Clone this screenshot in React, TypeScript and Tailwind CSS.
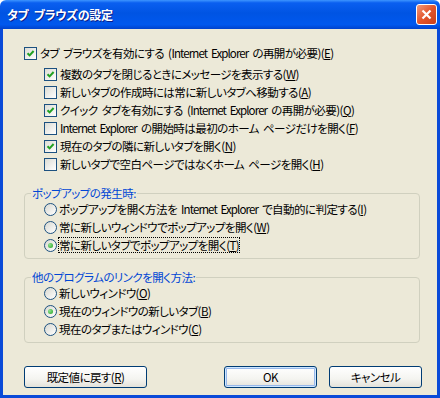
import React from "react";

type Item = {
  label: string;
  key: string;
  checked?: boolean;
};

const tabOptions: Item[] = [
  { label: "複数のタブを閉じるときにメッセージを表示する", key: "W", checked: true },
  { label: "新しいタブの作成時には常に新しいタブへ移動する", key: "A" },
  { label: "クイック タブを有効にする (Internet Explorer の再開が必要)", key: "Q", checked: true },
  { label: "Internet Explorer の開始時は最初のホーム ページだけを開く", key: "F" },
  { label: "現在のタブの隣に新しいタブを開く", key: "N", checked: true },
  { label: "新しいタブで空白ページではなくホーム ページを開く", key: "H" },
];

const popupOptions: Item[] = [
  { label: "ポップアップを開く方法を Internet Explorer で自動的に判定する", key: "I" },
  { label: "常に新しいウィンドウでポップアップを開く", key: "W" },
  { label: "常に新しいタブでポップアップを開く", key: "T", checked: true },
];

const linkOptions: Item[] = [
  { label: "新しいウィンドウ", key: "O" },
  { label: "現在のウィンドウの新しいタブ", key: "B", checked: true },
  { label: "現在のタブまたはウィンドウ", key: "C" },
];

// Latin runs are narrower in the original UI font
const renderText = (text: string) =>
  text.split("Internet Explorer").map((part, i, arr) => (
    <React.Fragment key={i}>
      {part}
      {i < arr.length - 1 && <span className="tracking-[-0.9px]">Internet Explorer</span>}
    </React.Fragment>
  ));

const Label = ({ item }: { item: Item }) => (
  <span className="whitespace-nowrap">
    {renderText(item.label)}(<u>{item.key}</u>)
  </span>
);

const CheckBox = ({ checked }: { checked?: boolean }) => (
  <span className="w-[13px] h-[13px] shrink-0 border border-[#1c5180] bg-[linear-gradient(135deg,#dcdcd4,#ffffff)] flex items-center justify-center">
    {checked && (
      <svg width="9" height="9" viewBox="0 0 9 9">
        <path d="M1.5 4.2 L3.6 6.4 L7.6 2" stroke="#21a121" strokeWidth="2" fill="none" />
      </svg>
    )}
  </span>
);

const Radio = ({ checked }: { checked?: boolean }) => (
  <span className="w-[13px] h-[13px] shrink-0 rounded-full border border-[#1c5180] bg-[linear-gradient(135deg,#d8d8d0,#ffffff)] flex items-center justify-center">
    {checked && (
      <span className="w-[5px] h-[5px] rounded-full bg-[radial-gradient(circle_at_35%_35%,#8fe28f,#21a121)]" />
    )}
  </span>
);

const Group = ({ title, items, focusChecked }: { title: string; items: Item[]; focusChecked?: boolean }) => (
  <fieldset className="border border-[#d0d0bf] rounded-[4px] pb-[4px]">
    <legend className="ml-[6px] px-[1px] text-[#0046d5] leading-[14px]">{title}</legend>
    <div className="pl-[19px]">
      {items.map((item, i) => (
        <div key={i} className="h-[18px] flex items-center gap-[2px]">
          <Radio checked={item.checked} />
          <span className={item.checked && focusChecked ? "outline outline-1 outline-dotted outline-black" : ""}>
            <Label item={item} />
          </span>
        </div>
      ))}
    </div>
  </fieldset>
);

const Button = ({ children, wide, focus }: { children: React.ReactNode; wide?: boolean; focus?: boolean }) => (
  <button
    className={
      "h-[22px] rounded-[3px] border border-[#003c74] bg-[linear-gradient(180deg,#ffffff_0%,#f4f4f0_60%,#e3e2da_100%)] text-black " +
      (wide ? "w-[123px] " : "w-[93px] ") +
      (focus ? "shadow-[inset_0_0_0_1px_#cee7ff,inset_0_0_0_2px_#98b8ea]" : "")
    }
  >
    {children}
  </button>
);

export default function App() {
  return (
    <div className="w-[440px] h-[398px] flex flex-col font-['Noto_Sans_CJK_JP',sans-serif] [font-feature-settings:'palt'] text-[11.5px] tracking-[-0.55px] [word-spacing:2px] leading-[14px] text-black">
      {/* title bar */}
      <div className="h-[29px] shrink-0 rounded-t-[6px] bg-[linear-gradient(180deg,#3d95ff_0%,#0a5ff0_10%,#0054e3_45%,#0058ee_85%,#0042cc_100%)] flex items-center pl-[7px] pr-[3px]">
        <span className="text-white font-bold text-[12px] tracking-[-0.3px] [word-spacing:3px] [text-shadow:1px_1px_0_#0a1e8a] flex-1">
          タブ ブラウズの設定
        </span>
        <span className="w-[21px] h-[21px] rounded-[3px] border border-white bg-[linear-gradient(135deg,#f09a7c,#e3552c_50%,#c9401a)] flex items-center justify-center">
          <svg width="11" height="11" viewBox="0 0 11 11">
            <path d="M1.5 1.5 L9.5 9.5 M9.5 1.5 L1.5 9.5" stroke="white" strokeWidth="2.2" />
          </svg>
        </span>
      </div>

      <div className="flex-1 bg-[#ece9d8] border-x-[3px] border-b-[3px] border-[#0a4ad8] pl-[21px] pr-[17px] pt-[15px] flex flex-col">
        <div className="h-[18px] flex items-center gap-[3px]">
          <CheckBox checked />
          <span className="whitespace-nowrap">
            タブ ブラウズを有効にする ({renderText("Internet Explorer")} の再開が必要)(<u>E</u>)
          </span>
        </div>
        <div className="pl-[20px] mt-[3px]">
          {tabOptions.map((item, i) => (
            <div key={i} className="h-[18px] flex items-center gap-[3px]">
              <CheckBox checked={item.checked} />
              <Label item={item} />
            </div>
          ))}
        </div>

        <div className="mt-[13px]">
          <Group title="ポップアップの発生時:" items={popupOptions} focusChecked />
        </div>
        <div className="mt-[11px]">
          <Group title="他のプログラムのリンクを開く方法:" items={linkOptions} />
        </div>

        <div className="mt-[23px] flex items-center justify-between -mr-[2px]">
          <Button wide>
            既定値に戻す(<u>R</u>)
          </Button>
          <div className="flex gap-[12px]">
            <Button focus>OK</Button>
            <Button>キャンセル</Button>
          </div>
        </div>
      </div>
    </div>
  );
}
